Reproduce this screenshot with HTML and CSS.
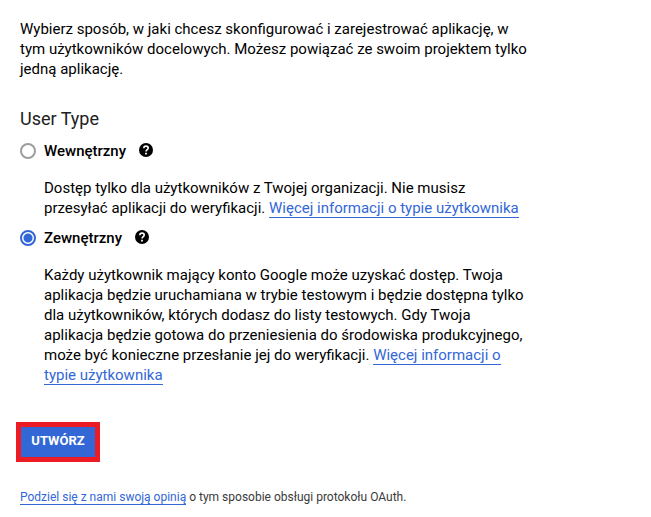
FILE: index.html
```html
<!DOCTYPE html>
<html lang="pl">
<head>
  <meta charset="UTF-8" />
  <meta name="viewport" content="width=device-width, initial-scale=1">
  <title>OAuth</title>
  <link rel="stylesheet" href="styles.css">
</head>
<body>
  <main class="consent">
    <p class="intro">Wybierz sposób, w jaki chcesz skonfigurować i zarejestrować aplikację, w tym użytkowników docelowych. Możesz powiązać ze swoim projektem tylko jedną aplikację.</p>

    <form class="user-type">
      <h2 id="user-type-title">User Type</h2>
      <div role="radiogroup" aria-labelledby="user-type-title">
        <div class="option">
          <input type="radio" id="internal" name="user-type" value="internal">
          <label for="internal">Wewnętrzny</label>
          <svg class="help" viewBox="0 0 14 14" aria-hidden="true">
            <circle cx="7" cy="7" r="7"/>
            <path d="M4.800 5.300C4.800 3.900 5.700 3.100 7 3.100S9.200 3.900 9.200 5C9.200 6.600 7 6.700 7 8.600" fill="none" stroke="#fff" stroke-width="1.600"/>
            <path d="M6.100 9.700h1.800v1.700H6.100z" fill="#fff"/>
          </svg>
        </div>
        <p class="description">Dostęp tylko dla użytkowników z Twojej organizacji. Nie musisz przesyłać aplikacji do weryfikacji. <a href="#">Więcej informacji o typie użytkownika</a></p>

        <div class="option">
          <input type="radio" id="external" name="user-type" value="external" checked>
          <label for="external">Zewnętrzny</label>
          <svg class="help" viewBox="0 0 14 14" aria-hidden="true">
            <circle cx="7" cy="7" r="7"/>
            <path d="M4.800 5.300C4.800 3.900 5.700 3.100 7 3.100S9.200 3.900 9.200 5C9.200 6.600 7 6.700 7 8.600" fill="none" stroke="#fff" stroke-width="1.600"/>
            <path d="M6.100 9.700h1.800v1.700H6.100z" fill="#fff"/>
          </svg>
        </div>
        <p class="description">Każdy użytkownik mający konto Google może uzyskać dostęp. Twoja aplikacja będzie uruchamiana w trybie testowym i będzie dostępna tylko dla użytkowników, których dodasz do listy testowych. Gdy Twoja aplikacja będzie gotowa do przeniesienia do środowiska produkcyjnego, może być konieczne przesłanie jej do weryfikacji. <a href="#">Więcej informacji o typie użytkownika</a></p>
      </div>

      <button type="button" class="create">UTWÓRZ</button>
    </form>

    <p class="feedback"><a href="#">Podziel się z nami swoją opinią</a> o tym sposobie obsługi protokołu OAuth.</p>
  </main>
</body>
</html>
```
FILE: styles.css
```css
body {
  font-family: Roboto, "Noto Sans", sans-serif;
  font-size: 15px;
  line-height: 20px;
  color: #000;
  background: #fff;
  margin: 0;
}
.consent {
  max-width: 512px;
  padding: 19px 20px 8px;
}
p {
  margin: 0;
}
a {
  color: #3367d6;
  text-decoration: none;
  border-bottom: 1px solid #3367d6;
}
.user-type h2 {
  font-size: 18px;
  font-weight: 400;
  line-height: 24px;
  color: #212121;
  margin: 28px 0 8px;
}
.option {
  display: flex;
  align-items: center;
  height: 24px;
}
.option input {
  appearance: none;
  box-sizing: border-box;
  width: 16px;
  height: 16px;
  margin: 0 8px 0 0;
  border: 2px solid #9e9e9e;
  border-radius: 50%;
}
.option input:checked {
  border-color: #3367d6;
  background: radial-gradient(circle, #3367d6 4px, #fff 5px);
}
.option label {
  font-weight: 500;
}
.help {
  width: 14px;
  height: 14px;
  margin: 0 0 2px 13px;
}
.description {
  padding: 15px 0 8px 24px;
}
.create {
  display: block;
  font: inherit;
  font-size: 13px;
  font-weight: 700;
  line-height: 20px;
  color: #fff;
  background: #3367d6;
  width: 84px;
  height: 40px;
  padding: 0 0 2px;
  border: 5px solid #ed1c24;
  margin: 29px -4px 25px;
}
.feedback {
  font-size: 12px;
  color: #3a3a3a;
}
```
